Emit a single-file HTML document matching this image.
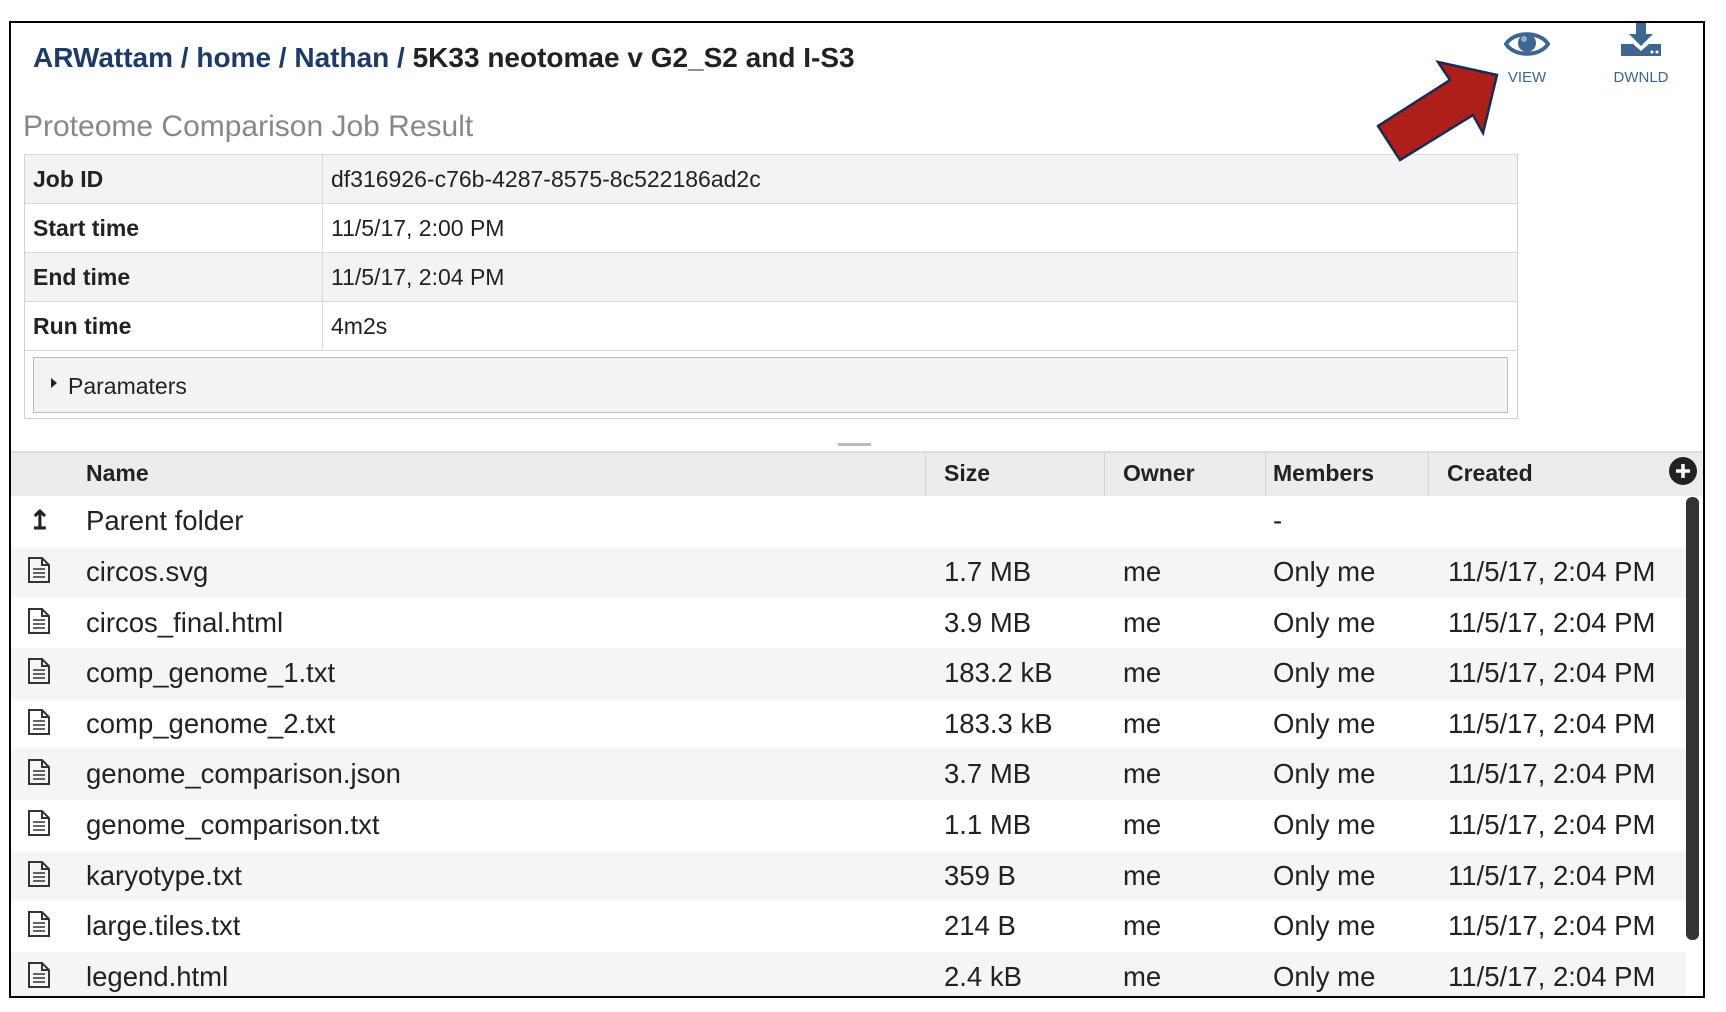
<!DOCTYPE html>
<html><head><meta charset="utf-8"><style>
*{margin:0;padding:0;box-sizing:border-box}
body{width:1726px;height:1012px;background:#fff;position:relative;overflow:hidden;font-family:"Liberation Sans",Arial,sans-serif;color:#222}
.abs{position:absolute}
.bc{left:33px;top:42px;font-size:28px;font-weight:bold;color:#1e3a66;white-space:nowrap}
.bc span{color:#222}
.ttl{left:23px;top:110px;font-size:30px;color:#888}
table.info{position:absolute;left:24px;top:154px;width:1494px;border-collapse:collapse;font-size:23px}
table.info td{border:1px solid #d8d8d8;height:49px;padding-left:8px}
table.info tr:nth-child(odd) td{background:#f3f3f3}
table.info td.k{width:298px;font-weight:bold}
.pbox{position:absolute;left:24px;top:154px;width:1494px;height:265px;border:1px solid #d0d0d0;border-top:none}
.par{left:33px;top:357px;width:1475px;height:56px;border:1px solid #bbb;background:#f3f3f3;font-size:23px;padding:15px 0 0 34px}
.par:before{content:"";position:absolute;left:17px;top:20px;border-left:6px solid #222;border-top:5px solid transparent;border-bottom:5px solid transparent}
.hd{left:11px;top:451px;width:1692px;height:45px;background:#ececec;border-top:2px solid #ddd;font-size:23px;font-weight:bold}
.hd div{position:absolute;top:7px}
.vd{position:absolute;top:0;width:1px;height:45px;background:#d6d6d6}
.row{position:absolute;left:0;width:1675px;height:51px;font-size:27.5px}
.row div{position:absolute;top:9px;white-space:nowrap}
.ic{left:16px;top:9px!important}
.frame{position:absolute;left:9px;top:21px;width:1696px;height:977px;border:2px solid #000}
</style></head><body>
<div class="abs bc">ARWattam / home / Nathan / <span>5K33 neotomae v G2_S2 and I-S3</span></div>
<div class="abs ttl">Proteome Comparison Job Result</div>
<table class="info">
<tr><td class="k">Job ID</td><td>df316926-c76b-4287-8575-8c522186ad2c</td></tr>
<tr><td class="k">Start time</td><td>11/5/17, 2:00 PM</td></tr>
<tr><td class="k">End time</td><td>11/5/17, 2:04 PM</td></tr>
<tr><td class="k">Run time</td><td>4m2s</td></tr>
</table>
<div class="pbox"></div>
<div class="abs par">Paramaters</div>
<div class="abs" style="left:838px;top:443px;width:33px;height:3px;background:#bbb"></div>
<div class="abs hd">
<div style="left:75px">Name</div><div class="vd" style="left:914px;top:0"></div>
<div style="left:933px">Size</div><div class="vd" style="left:1093px;top:0"></div>
<div style="left:1112px">Owner</div><div class="vd" style="left:1254px;top:0"></div>
<div style="left:1262px">Members</div><div class="vd" style="left:1417px;top:0"></div>
<div style="left:1436px">Created</div>
<svg style="position:absolute;left:1657px;top:3px" width="30" height="30"><circle cx="15" cy="15" r="14" fill="#222"/><path d="M15 8v14M8 15h14" stroke="#fff" stroke-width="3.5"/></svg>
</div>
<div class="abs" style="left:11px;top:496px;width:1692px">
<div class="row" style="top:0;background:#fff"><div class="ic" style="font-size:26px;font-weight:bold;left:18px">↥</div><div style="left:75px">Parent folder</div><div style="left:1262px">-</div></div>
</div>
<div id="rows" class="abs" style="left:11px;top:547px;width:1692px"></div>
<div class="abs" style="left:1686px;top:497px;width:13px;height:443px;background:#333;border-radius:6px"></div>
<div class="abs" style="left:1500px;top:28px;width:54px;text-align:center;color:#3d6690;font-size:15px;line-height:22px">
<svg width="46" height="32" viewBox="0 0 46 32"><path d="M2 16C10 3 36 3 44 16C36 29 10 29 2 16Z" fill="none" stroke="#3d6690" stroke-width="4"/><circle cx="23" cy="15" r="9" fill="#3d6690"/><circle cx="20" cy="11" r="3" fill="#8fb0cf"/></svg><br>VIEW</div>
<div class="abs" style="left:1601px;top:22px;width:80px;text-align:center;color:#3d6690;font-size:15px;line-height:24px">
<svg width="42" height="36" viewBox="0 0 42 36"><path d="M16 0h10v12h7L21 24L9 12h7Z" fill="#3d6690"/><path d="M1 22h12l8 7l8-7h12v12H1Z" fill="#3d6690"/><circle cx="32" cy="30" r="1.5" fill="#fff"/><circle cx="37" cy="30" r="1.5" fill="#fff"/></svg><br>DWNLD</div>
<div class="abs" style="left:0;top:998px;width:1726px;height:14px;background:#fff"></div>
<div class="abs" style="left:1705px;top:0;width:21px;height:1012px;background:#fff"></div>
<div class="frame"></div>
<svg class="abs" style="left:0;top:0" width="1726" height="1012"><path d="M1438 62L1497 75L1483 133L1473 115L1400 160L1378 126L1450 80Z" fill="#ad1f18" stroke="#1a2a55" stroke-width="2.5"/></svg>
<script>
var d=[["circos.svg","1.7 MB"],["circos_final.html","3.9 MB"],["comp_genome_1.txt","183.2 kB"],["comp_genome_2.txt","183.3 kB"],["genome_comparison.json","3.7 MB"],["genome_comparison.txt","1.1 MB"],["karyotype.txt","359 B"],["large.tiles.txt","214 B"],["legend.html","2.4 kB"]];
var h="";d.forEach(function(r,i){h+='<div class="row" style="top:'+(i*50.6)+'px;background:'+(i%2==0?'#f5f5f5':'#fff')+'"><div class="ic"><svg width="24" height="28" viewBox="0 0 24 28"><path d="M2 2h13l7 7v17H2Z M15 2v7h7" fill="none" stroke="#333" stroke-width="2"/><path d="M6 13h12M6 17h12M6 21h12" stroke="#333" stroke-width="1.6"/></svg></div><div style="left:75px">'+r[0]+'</div><div style="left:933px">'+r[1]+'</div><div style="left:1112px">me</div><div style="left:1262px">Only me</div><div style="left:1437px">11/5/17, 2:04 PM</div></div>';});
document.getElementById("rows").innerHTML=h;
</script>
</body></html>
